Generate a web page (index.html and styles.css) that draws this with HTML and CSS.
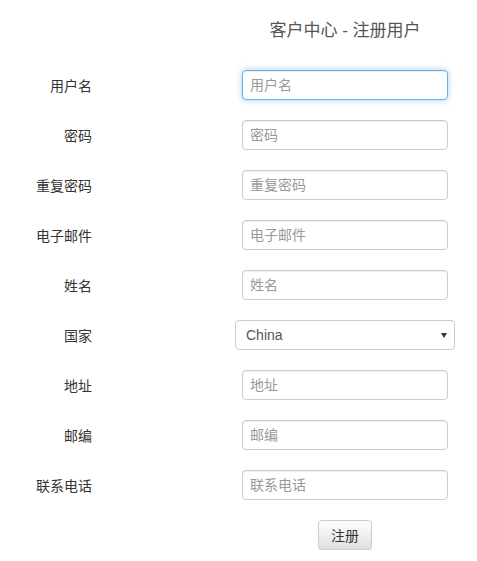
FILE: index.html
```html
<!DOCTYPE html>
<html lang="zh-CN">
<head>
    <meta charset="UTF-8">
    <meta name="viewport" content="width=device-width, initial-scale=1.0">
    <title>客户中心 - 注册用户</title>
    <link rel="stylesheet" href="styles.css">
</head>
<body>

    <form class="reg-form">
        <div class="spacer"></div>
        <h3 class="form-title">客户中心 - 注册用户</h3>

        <label class="field-label" for="username">用户名</label>
        <input class="field-input focused" type="text" id="username" placeholder="用户名">

        <label class="field-label" for="password">密码</label>
        <input class="field-input" type="password" id="password" placeholder="密码">

        <label class="field-label" for="password2">重复密码</label>
        <input class="field-input" type="password" id="password2" placeholder="重复密码">

        <label class="field-label" for="email">电子邮件</label>
        <input class="field-input" type="text" id="email" placeholder="电子邮件">

        <label class="field-label" for="realname">姓名</label>
        <input class="field-input" type="text" id="realname" placeholder="姓名">

        <label class="field-label" for="country">国家</label>
        <span class="select-wrap">
            <select class="field-select" id="country">
                <option>China</option>
            </select>
        </span>

        <label class="field-label" for="address">地址</label>
        <input class="field-input" type="text" id="address" placeholder="地址">

        <label class="field-label" for="zipcode">邮编</label>
        <input class="field-input" type="text" id="zipcode" placeholder="邮编">

        <label class="field-label" for="phone">联系电话</label>
        <input class="field-input" type="text" id="phone" placeholder="联系电话">

        <div class="spacer"></div>
        <button class="btn-submit" type="button">注册</button>
    </form>

</body>
</html>
```

FILE: styles.css
```css
body {
    margin: 0;
    background-color: #fff;
    font-family: "Liberation Sans", "Noto Sans CJK SC", sans-serif;
    font-size: 14px;
    color: #333;
}
.reg-form {
    display: grid;
    grid-template-columns: 92px 220px;
    grid-auto-rows: 30px;
    column-gap: 143px;
    row-gap: 20px;
    padding-top: 20px;
    align-items: center;
    justify-items: center;
}
.form-title {
    margin: -2px 0 0 0;
    font-size: 17px;
    font-weight: normal;
    color: #555;
    line-height: 25px;
    white-space: nowrap;
    align-self: start;
}
.field-label {
    justify-self: end;
    color: #333;
    white-space: nowrap;
}
.field-input {
    box-sizing: border-box;
    width: 206px;
    height: 30px;
    padding: 0 7px;
    border: 1px solid #ccc;
    border-radius: 4px;
    font-family: inherit;
    font-size: 14px;
    color: #555;
    box-shadow: inset 0 1px 1px rgba(0, 0, 0, 0.075);
    outline: none;
}
.field-input::placeholder {
    color: #999;
}
.field-input.focused {
    border-color: #66afe9;
    box-shadow: inset 0 1px 1px rgba(0, 0, 0, 0.075), 0 0 6px rgba(102, 175, 233, 0.6);
}
.select-wrap {
    position: relative;
    display: block;
    width: 220px;
    height: 30px;
}
.select-wrap::after {
    content: "";
    position: absolute;
    right: 8px;
    top: 13px;
    border-left: 3px solid transparent;
    border-right: 3px solid transparent;
    border-top: 5px solid #333;
}
.field-select {
    -webkit-appearance: none;
    appearance: none;
    box-sizing: border-box;
    width: 220px;
    height: 30px;
    padding: 0 10px;
    border: 1px solid #ccc;
    border-radius: 4px;
    background-color: #fff;
    font-family: inherit;
    font-size: 14px;
    color: #555;
}
.btn-submit {
    box-sizing: border-box;
    height: 30px;
    padding: 0 12px;
    border: 1px solid #ccc;
    border-radius: 4px;
    background-image: linear-gradient(to bottom, #fff 0, #e0e0e0 100%);
    font-family: inherit;
    font-size: 14px;
    color: #333;
    box-shadow: inset 0 1px 0 rgba(255, 255, 255, 0.15), 0 1px 1px rgba(0, 0, 0, 0.075);
    cursor: pointer;
}
```
